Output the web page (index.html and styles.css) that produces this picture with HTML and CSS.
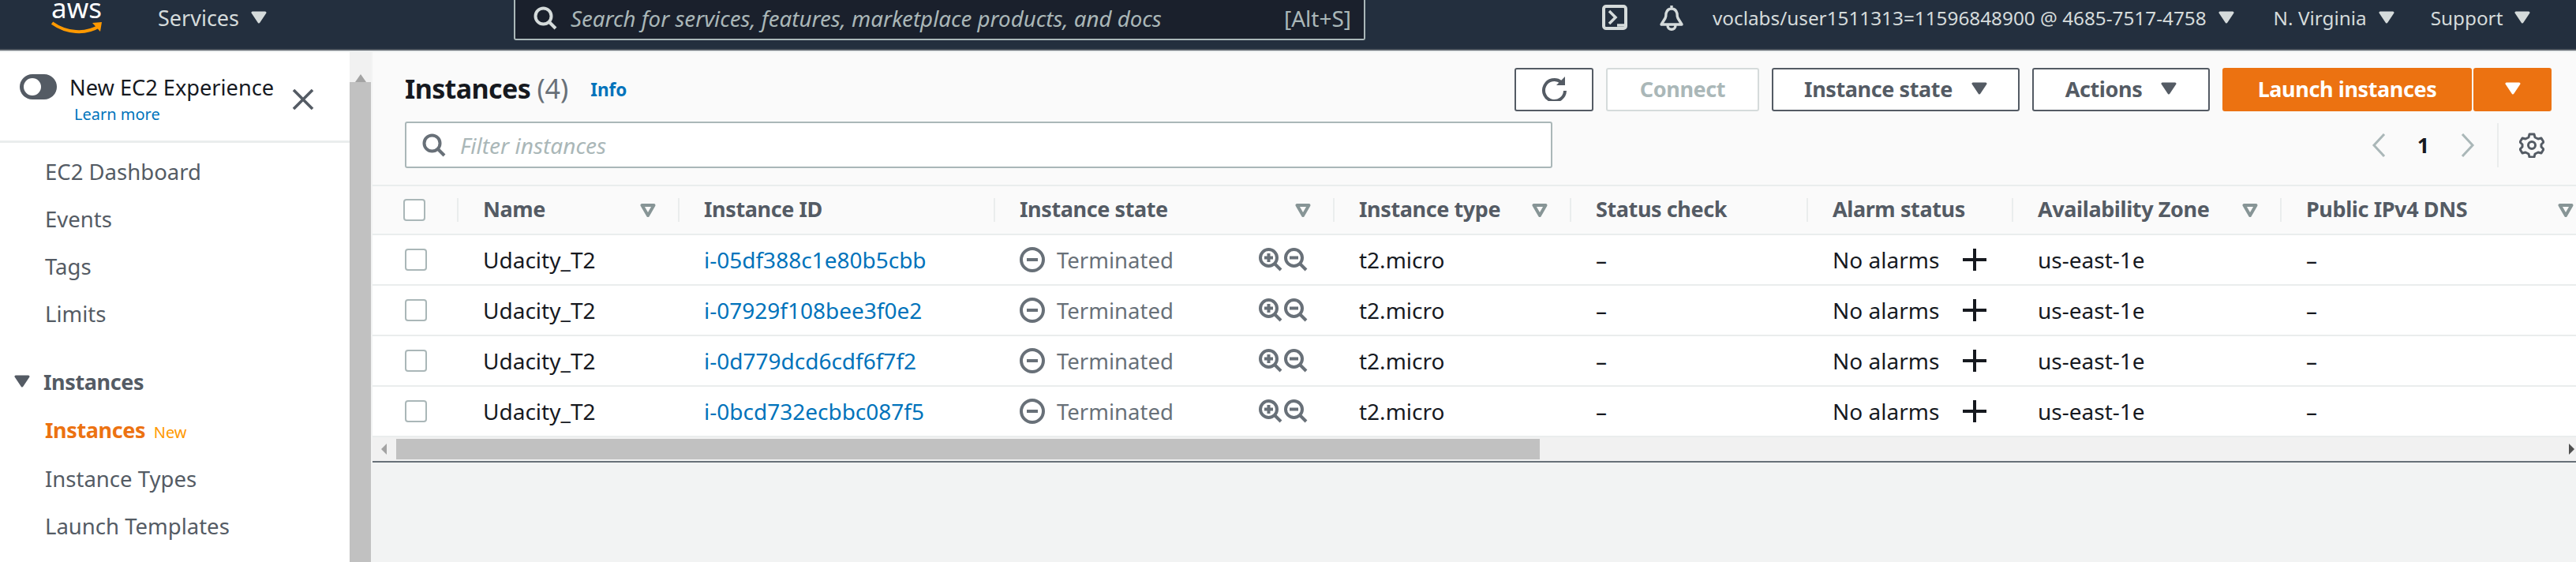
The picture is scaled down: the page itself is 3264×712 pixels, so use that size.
FILE: index.html
```html
<!DOCTYPE html>
<html lang="en">
<head>
    <meta charset="UTF-8">
    <title>Instances | EC2 Management Console</title>
    <link rel="stylesheet" href="styles.css">
</head>
<body>
    <svg class="defs" aria-hidden="true">
        <symbol id="caret" viewBox="0 0 20 16"><path d="M2 2h16l-8 12z" fill="currentColor" stroke="currentColor" stroke-width="3" stroke-linejoin="round"/></symbol>
        <symbol id="sort" viewBox="0 0 20 17"><path d="M2.5 2h15L10 15z" fill="none" stroke="currentColor" stroke-width="4" stroke-linejoin="round"/></symbol>
        <symbol id="glass" viewBox="0 0 30 30"><circle cx="12.5" cy="12.5" r="10" fill="none" stroke="currentColor" stroke-width="4"/><path d="M20 20l8 8" fill="none" stroke="currentColor" stroke-width="4"/></symbol>
        <symbol id="zoomin" viewBox="0 0 30 30"><circle cx="12.5" cy="12.5" r="10.5" fill="none" stroke="currentColor" stroke-width="4"/><path d="M20 20l8 8M7 12.5h11M12.5 7v11" fill="none" stroke="currentColor" stroke-width="4"/></symbol>
        <symbol id="zoomout" viewBox="0 0 30 30"><circle cx="12.5" cy="12.5" r="10.5" fill="none" stroke="currentColor" stroke-width="4"/><path d="M20 20l8 8M7 12.5h11" fill="none" stroke="currentColor" stroke-width="4"/></symbol>
        <symbol id="stopped" viewBox="0 0 32 32"><circle cx="16" cy="16" r="14" fill="none" stroke="currentColor" stroke-width="4"/><path d="M9 16h14" fill="none" stroke="currentColor" stroke-width="4"/></symbol>
        <symbol id="add" viewBox="0 0 30 28"><path d="M15 0v28M0 14h30" fill="none" stroke="currentColor" stroke-width="4"/></symbol>
    </svg>

    <header class="topbar">
        <a class="logo">
            <span class="logo-text">aws</span>
            <svg class="logo-smile" viewBox="0 0 66 16"><path d="M1 2c18 13 42 15 60 4" fill="none" stroke="#ff9900" stroke-width="4"/><path d="M52 2l12-1-2 12z" fill="#ff9900"/></svg>
        </a>
        <span class="top-link services">Services <svg class="caret"><use href="#caret"/></svg></span>
        <div class="search">
            <svg class="search-icon"><use href="#glass"/></svg>
            <span class="search-text">Search for services, features, marketplace products, and docs</span>
            <span class="search-key">[Alt+S]</span>
        </div>
        <svg class="shell-icon" viewBox="0 0 32 32"><rect x="2" y="2" width="28" height="28" rx="3" fill="none" stroke="currentColor" stroke-width="4"/><path d="M9 8l8 8-8 8M19 26h9" fill="none" stroke="currentColor" stroke-width="3.5"/></svg>
        <svg class="bell-icon" viewBox="0 0 32 32"><path d="M16 1v4M3 25h26l-5-8c-1-2-1-4-1-6-1-4-3-6-7-6s-6 2-7 6c0 2 0 4-1 6zM11 26c0 7 10 7 10 0" fill="none" stroke="currentColor" stroke-width="3.4" stroke-linejoin="round"/></svg>
        <span class="top-link account">voclabs/user1511313=11596848900 @ 4685-7517-4758 <svg class="caret"><use href="#caret"/></svg></span>
        <span class="top-link region">N. Virginia <svg class="caret"><use href="#caret"/></svg></span>
        <span class="top-link support">Support <svg class="caret"><use href="#caret"/></svg></span>
    </header>

    <div class="page">
        <aside class="sidebar">
            <div class="experience">
                <span class="toggle"><span class="knob"></span></span>
                <div class="experience-text">
                    <div class="experience-title">New EC2 Experience</div>
                    <a class="learn">Learn more</a>
                </div>
                <svg class="close" viewBox="0 0 28 26"><path d="M2 1l24 24M26 1L2 25" fill="none" stroke="currentColor" stroke-width="3.6"/></svg>
            </div>
            <nav class="nav">
                <a class="nav-item">EC2 Dashboard</a>
                <a class="nav-item">Events</a>
                <a class="nav-item">Tags</a>
                <a class="nav-item">Limits</a>
                <div class="nav-group"><svg class="caret"><use href="#caret"/></svg>Instances</div>
                <a class="nav-item active">Instances <span class="new">New</span></a>
                <a class="nav-item">Instance Types</a>
                <a class="nav-item">Launch Templates</a>
            </nav>
        </aside>
        <div class="side-scroll">
            <div class="side-arrow"></div>
            <div class="side-thumb"></div>
        </div>

        <main class="content">
            <section class="panel-head">
                <div class="title-row">
                    <h1>Instances <span class="count">(4)</span></h1>
                    <a class="info">Info</a>
                    <div class="actions">
                        <button class="btn btn-icon">
                            <svg class="refresh" viewBox="0 0 32 32"><path d="M25 8a13.5 13.5 0 1 0 5 11" fill="none" stroke="currentColor" stroke-width="4"/><path d="M19 12h11V1z" fill="currentColor"/></svg>
                        </button>
                        <button class="btn btn-connect" disabled>Connect</button>
                        <button class="btn btn-state">Instance state <svg class="caret"><use href="#caret"/></svg></button>
                        <button class="btn btn-actions">Actions <svg class="caret"><use href="#caret"/></svg></button>
                        <div class="launch">
                            <button class="btn btn-launch">Launch instances</button>
                            <button class="btn btn-drop"><svg class="caret"><use href="#caret"/></svg></button>
                        </div>
                    </div>
                </div>
                <div class="filter-row">
                    <div class="filter">
                        <svg class="filter-icon"><use href="#glass"/></svg>
                        <span class="filter-text">Filter instances</span>
                    </div>
                    <div class="pager">
                        <svg class="chev" viewBox="0 0 18 30"><path d="M16 1L3 15l13 14" fill="none" stroke="currentColor" stroke-width="3"/></svg>
                        <span class="page-num">1</span>
                        <svg class="chev" viewBox="0 0 18 30"><path d="M2 1l13 14L2 29" fill="none" stroke="currentColor" stroke-width="3"/></svg>
                        <span class="pager-sep"></span>
                        <svg class="gear" viewBox="0 0 32 32"><path d="M13 2h6l1 4 4 2 4-1 3 5-3 3v3l3 3-3 5-4-1-4 2-1 4h-6l-1-4-4-2-4 1-3-5 3-3v-3L1 12l3-5 4 1 4-2z" fill="none" stroke="currentColor" stroke-width="3" stroke-linejoin="round"/><circle cx="16" cy="16" r="4.5" fill="none" stroke="currentColor" stroke-width="3"/></svg>
                    </div>
                </div>
            </section>

            <div class="table-wrap">
                <table class="instances">
                    <colgroup>
                        <col class="c-check"><col class="c-name"><col class="c-id"><col class="c-state"><col class="c-type"><col class="c-status"><col class="c-alarm"><col class="c-az"><col class="c-dns">
                    </colgroup>
                    <thead>
                        <tr>
                            <th class="head-check"><span class="checkbox"></span></th>
                            <th><div class="th-in">Name <svg class="sort"><use href="#sort"/></svg></div></th>
                            <th><div class="th-in">Instance ID</div></th>
                            <th><div class="th-in">Instance state <svg class="sort"><use href="#sort"/></svg></div></th>
                            <th><div class="th-in">Instance type <svg class="sort"><use href="#sort"/></svg></div></th>
                            <th><div class="th-in">Status check</div></th>
                            <th><div class="th-in">Alarm status</div></th>
                            <th><div class="th-in">Availability Zone <svg class="sort"><use href="#sort"/></svg></div></th>
                            <th><div class="th-in">Public IPv4 DNS <svg class="sort"><use href="#sort"/></svg></div></th>
                        </tr>
                    </thead>
                    <tbody>
                        <tr>
                            <td class="cell-check"><span class="checkbox"></span></td>
                            <td>Udacity_T2</td>
                            <td><a class="link">i-05df388c1e80b5cbb</a></td>
                            <td><div class="state"><svg class="state-icon"><use href="#stopped"/></svg><span class="state-text">Terminated</span><svg class="zoom-icon"><use href="#zoomin"/></svg><svg class="zoom-icon"><use href="#zoomout"/></svg></div></td>
                            <td>t2.micro</td>
                            <td>–</td>
                            <td><div class="alarm">No alarms<svg class="plus"><use href="#add"/></svg></div></td>
                            <td>us-east-1e</td>
                            <td>–</td>
                        </tr>
                        <tr>
                            <td class="cell-check"><span class="checkbox"></span></td>
                            <td>Udacity_T2</td>
                            <td><a class="link">i-07929f108bee3f0e2</a></td>
                            <td><div class="state"><svg class="state-icon"><use href="#stopped"/></svg><span class="state-text">Terminated</span><svg class="zoom-icon"><use href="#zoomin"/></svg><svg class="zoom-icon"><use href="#zoomout"/></svg></div></td>
                            <td>t2.micro</td>
                            <td>–</td>
                            <td><div class="alarm">No alarms<svg class="plus"><use href="#add"/></svg></div></td>
                            <td>us-east-1e</td>
                            <td>–</td>
                        </tr>
                        <tr>
                            <td class="cell-check"><span class="checkbox"></span></td>
                            <td>Udacity_T2</td>
                            <td><a class="link">i-0d779dcd6cdf6f7f2</a></td>
                            <td><div class="state"><svg class="state-icon"><use href="#stopped"/></svg><span class="state-text">Terminated</span><svg class="zoom-icon"><use href="#zoomin"/></svg><svg class="zoom-icon"><use href="#zoomout"/></svg></div></td>
                            <td>t2.micro</td>
                            <td>–</td>
                            <td><div class="alarm">No alarms<svg class="plus"><use href="#add"/></svg></div></td>
                            <td>us-east-1e</td>
                            <td>–</td>
                        </tr>
                        <tr>
                            <td class="cell-check"><span class="checkbox"></span></td>
                            <td>Udacity_T2</td>
                            <td><a class="link">i-0bcd732ecbbc087f5</a></td>
                            <td><div class="state"><svg class="state-icon"><use href="#stopped"/></svg><span class="state-text">Terminated</span><svg class="zoom-icon"><use href="#zoomin"/></svg><svg class="zoom-icon"><use href="#zoomout"/></svg></div></td>
                            <td>t2.micro</td>
                            <td>–</td>
                            <td><div class="alarm">No alarms<svg class="plus"><use href="#add"/></svg></div></td>
                            <td>us-east-1e</td>
                            <td>–</td>
                        </tr>
                    </tbody>
                </table>
            </div>

            <div class="h-scroll">
                <svg class="h-arrow" viewBox="0 0 8 14"><path d="M7 0v14L0 7z" fill="#a3a3a3"/></svg>
                <div class="h-thumb"></div>
                <svg class="h-arrow h-arrow-right" viewBox="0 0 8 14"><path d="M1 0v14l7-7z" fill="#505050"/></svg>
            </div>
        </main>
    </div>
</body>
</html>
```

FILE: styles.css
```css
* {
    box-sizing: border-box;
}

html, body {
    height: 100%;
}

body {
    margin: 0;
    overflow: hidden;
    background: #f2f3f3;
    color: #16191f;
    font-family: "Noto Sans", "Open Sans", sans-serif;
    font-size: 28px;
}

.defs {
    display: none;
}

/* top bar */
.topbar {
    display: flex;
    align-items: flex-start;
    height: 64px;
    padding-left: 65px;
    background: #232f3e;
    border-bottom: 2px solid #545b64;
    color: #d5dbdb;
}

.logo {
    display: block;
    width: 66px;
    height: 62px;
}

.logo-text {
    display: block;
    height: 27px;
    color: #fff;
    font-size: 35px;
    line-height: 20px;
}

.logo-smile {
    display: block;
    width: 66px;
    height: 16px;
}

.top-link {
    display: flex;
    align-items: center;
    gap: 15px;
    height: 44px;
    font-size: 24.3px;
    white-space: nowrap;
}

.caret {
    width: 20px;
    height: 16px;
    flex: none;
}

.services {
    margin-left: 69px;
    font-size: 27px;
}

.search {
    display: flex;
    align-items: center;
    width: 1079px;
    height: 51px;
    margin-left: 313px;
    padding: 0 16px 3px 23px;
    background: #1a202c;
    border: 2px solid #aab7b8;
    border-top: none;
    border-radius: 0 0 3px 3px;
}

.search-icon {
    width: 30px;
    height: 30px;
    flex: none;
    color: #d5dbdb;
}

.search-text {
    margin-left: 17px;
    color: #aab7b8;
    font-size: 27.7px;
    font-style: italic;
    white-space: nowrap;
}

.search-key {
    margin-left: auto;
    color: #aab7b8;
    font-size: 28px;
}

.shell-icon {
    width: 32px;
    height: 32px;
    margin: 6px 0 0 300px;
    flex: none;
}

.bell-icon {
    width: 32px;
    height: 34px;
    margin: 5px 0 0 40px;
    flex: none;
}

.account {
    margin-left: 36px;
}

.region {
    margin-left: 50px;
}

.support {
    margin-left: 46px;
}

/* page columns */
.page {
    display: flex;
    height: calc(100% - 64px);
    border-top: 2px solid #eaeded;
}

.sidebar {
    width: 443px;
    flex: none;
    overflow: hidden;
    background: #fff;
}

.experience {
    display: flex;
    align-items: flex-start;
    height: 115px;
    padding: 28px 0 0 25px;
    border-bottom: 3px solid #eaeded;
}

.toggle {
    display: flex;
    align-items: center;
    width: 47px;
    height: 32px;
    padding-left: 5px;
    background: #545b64;
    border-radius: 16px;
}

.knob {
    width: 22px;
    height: 22px;
    background: #fff;
    border-radius: 50%;
}

.experience-text {
    width: 282px;
    margin-left: 16px;
}

.experience-title {
    margin-top: -2px;
    font-size: 27.2px;
    line-height: 38px;
    white-space: nowrap;
}

.learn {
    display: block;
    margin: 0 0 0 6px;
    color: #0073bb;
    font-size: 20px;
    line-height: 30px;
}

.close {
    width: 28px;
    height: 26px;
    margin-top: 19px;
    color: #545b64;
}

.nav {
    padding-top: 7px;
}

.nav-item {
    display: block;
    height: 60px;
    padding-left: 57px;
    color: #545b64;
    font-size: 27.5px;
    line-height: 60px;
    white-space: nowrap;
}

.nav-group {
    display: flex;
    align-items: center;
    gap: 17px;
    height: 60px;
    margin-top: 25px;
    padding-left: 18px;
    color: #545b64;
    font-size: 27px;
    font-weight: 700;
    letter-spacing: -0.4px;
    white-space: nowrap;
}

.nav-item.active {
    height: 64px;
    line-height: 64px;
    color: #ec7211;
    font-size: 27px;
    font-weight: 700;
    letter-spacing: -0.4px;
}

.new {
    margin-left: 4px;
    color: #ff9900;
    font-size: 20px;
    font-weight: 400;
    letter-spacing: 0;
}

.side-scroll {
    display: flex;
    flex-direction: column;
    width: 27px;
    flex: none;
    background: #f1f1f1;
    margin-right: 2px;
}

.side-arrow {
    height: 28px;
    margin: 10px auto 0;
    width: 0;
    border: 7px solid transparent;
    border-top: none;
    border-bottom: 10px solid #a3a3a3;
}

.side-thumb {
    flex: 1;
    background: #c1c1c1;
}

/* main area */
.content {
    flex: 1;
    min-width: 0;
    background: #f2f3f3;
}

.panel-head {
    height: 170px;
    padding: 20px 31px 0 41px;
    background: #fafafa;
    border-bottom: 2px solid #eaeded;
}

.title-row {
    display: flex;
    align-items: center;
    height: 55px;
}

h1 {
    margin: 0 0 3px;
    font-size: 34px;
    font-weight: 700;
    letter-spacing: -0.6px;
    white-space: nowrap;
}

.count {
    color: #687078;
    font-weight: 400;
    letter-spacing: 0;
}

.info {
    margin: 0 0 1px 28px;
    color: #0073bb;
    font-size: 22.5px;
    font-weight: 700;
}

.actions {
    display: flex;
    gap: 16px;
    margin-left: auto;
}

.btn {
    display: flex;
    align-items: center;
    justify-content: center;
    gap: 24px;
    height: 55px;
    padding: 0 0 3px;
    background: #fff;
    border: 2px solid #545b64;
    border-radius: 3px;
    color: #545b64;
    font-family: inherit;
    font-size: 27px;
    font-weight: 700;
    letter-spacing: -0.4px;
    white-space: nowrap;
}

.btn-icon {
    width: 100px;
}

.refresh {
    width: 32px;
    height: 32px;
}

.btn-connect {
    width: 194px;
    border-color: #d5dbdb;
    color: #aab7b8;
}

.btn-state {
    width: 314px;
}

.btn-actions {
    width: 225px;
}

.launch {
    display: flex;
    gap: 2px;
}

.btn-launch, .btn-drop {
    background: #ec7211;
    border-color: #ec7211;
    color: #fff;
}

.btn-launch {
    width: 316px;
}

.btn-drop {
    width: 99px;
}

.filter-row {
    display: flex;
    align-items: center;
    margin-top: 13px;
}

.filter {
    display: flex;
    align-items: center;
    width: 1454px;
    height: 59px;
    padding-left: 20px;
    background: #fff;
    border: 2px solid #aab7b8;
    border-radius: 3px;
}

.filter-icon {
    width: 30px;
    height: 30px;
    color: #687078;
}

.filter-text {
    margin-left: 18px;
    color: #aab7b8;
    font-style: italic;
}

.pager {
    display: flex;
    align-items: center;
    margin-left: auto;
    padding-right: 9px;
}

.chev {
    width: 18px;
    height: 30px;
    color: #aab7b8;
}

.page-num {
    width: 95px;
    font-size: 27px;
    text-align: center;
    font-weight: 700;
}

.pager-sep {
    width: 2px;
    height: 56px;
    margin: 0 26px 0 28px;
    background: #eaeded;
}

.gear {
    width: 32px;
    height: 32px;
    color: #545b64;
}

/* table */
.table-wrap {
    overflow: hidden;
    background: #fff;
}

.instances {
    width: 2817px;
    table-layout: fixed;
    border-collapse: separate;
    border-spacing: 0;
}

.c-check { width: 107px; }
.c-name { width: 280px; }
.c-id { width: 400px; }
.c-state { width: 430px; }
.c-type { width: 300px; }
.c-status { width: 300px; }
.c-alarm { width: 260px; }
.c-az { width: 340px; }
.c-dns { width: 400px; }

th {
    height: 62px;
    padding: 0;
    background: #fafafa;
    border-bottom: 2px solid #eaeded;
    color: #545b64;
    font-size: 27px;
    font-weight: 700;
    letter-spacing: -0.4px;
    text-align: left;
}

.th-in {
    display: flex;
    align-items: center;
    justify-content: space-between;
    height: 30px;
    padding: 0 28px 4px 31px;
    border-left: 2px solid #eaeded;
    white-space: nowrap;
}

.sort {
    width: 20px;
    height: 17px;
    margin-top: 4px;
    flex: none;
    color: #879596;
}

td {
    height: 64px;
    padding: 0 0 0 33px;
    border-bottom: 2px solid #eaeded;
    white-space: nowrap;
}

.head-check {
    padding-left: 39px;
}

td.cell-check {
    padding-left: 41px;
}

.checkbox {
    display: block;
    width: 28px;
    height: 28px;
    background: #fff;
    border: 2px solid #aab7b8;
    border-radius: 4px;
}

.link {
    color: #0073bb;
}

.state {
    display: flex;
    align-items: center;
}

.state-icon {
    width: 32px;
    height: 32px;
    flex: none;
    color: #687078;
}

.state-text {
    width: 256px;
    margin-left: 15px;
    color: #687078;
    font-size: 27.5px;
}

.zoom-icon {
    width: 30px;
    height: 30px;
    flex: none;
    margin-right: 2px;
    color: #687078;
}

.alarm {
    display: flex;
    align-items: center;
    justify-content: space-between;
    padding-right: 32px;
}

.plus {
    width: 30px;
    height: 28px;
    flex: none;
}

.h-scroll {
    display: flex;
    align-items: center;
    height: 32px;
    background: #f1f1f1;
    border-bottom: 2px solid #687078;
}

.h-arrow {
    width: 8px;
    height: 14px;
    margin-left: 11px;
    flex: none;
}

.h-thumb {
    width: 1449px;
    height: 26px;
    margin-left: 11px;
    background: #c1c1c1;
}

.h-arrow-right {
    margin-left: auto;
    margin-right: 2px;
}
```
